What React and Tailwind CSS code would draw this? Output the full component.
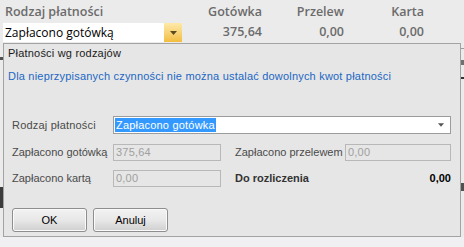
import React from "react";

const Arrow = ({ className }) => (
  <svg width="7" height="4" viewBox="0 0 7 4" className={className}>
    <path d="M0 0h7L3.5 4z" fill="currentColor" />
  </svg>
);

const Field = ({ value, className }) => (
  <div
    className={`h-[17px] border border-[#b8b8b8] bg-[#e6e6e6] text-[#a0a0a0] text-[11px] leading-[15px] pl-[2px] tracking-[0.2px] ${className}`}
  >
    {value}
  </div>
);

const Btn = ({ children }) => (
  <button className="w-[75px] h-[24px] rounded-[3px] border border-[#8e8e8e] bg-gradient-to-b from-[#f2f2f2] via-[#e8e8e8] to-[#cfcfcf] text-[11px] text-black shadow-[inset_0_0_0_1px_#fafafa]">
    {children}
  </button>
);

export default function App() {
  return (
    <div
      className="relative w-[464px] h-[247px] overflow-hidden bg-[#ebebeb]"
      style={{ fontFamily: "'Open Sans', 'Liberation Sans', sans-serif" }}
    >
      {/* header of the grid behind */}
      <div className="flex pt-[4px] text-[12.5px] font-semibold text-[#6b6b6b] leading-[16px]">
        <div className="w-[182px] pl-[5px]">Rodzaj płatności</div>
        <div className="w-[80px] text-right">Gotówka</div>
        <div className="w-[82px] text-right">Przelew</div>
        <div className="w-[80px] text-right">Karta</div>
      </div>
      <div className="flex mt-[3px] items-center">
        <div className="ml-[3px] w-[179px] h-[19px] bg-white flex items-center">
          <span className="flex-1 pl-[2px] text-[12px] text-black leading-[19px]">Zapłacono gotówką</span>
          <div className="w-[18px] h-[19px] bg-gradient-to-b from-[#fdeaa8] to-[#f3bd3c] flex items-center justify-center">
            <Arrow className="text-[#5a4a20]" />
          </div>
        </div>
        <div className="w-[80px] text-right text-[12.5px] font-semibold text-[#6b6b6b]">375,64</div>
        <div className="w-[82px] text-right text-[12.5px] font-semibold text-[#6b6b6b]">0,00</div>
        <div className="w-[80px] text-right text-[12.5px] font-semibold text-[#6b6b6b]">0,00</div>
      </div>

      {/* grid remains peeking out on both sides */}
      <div className="absolute left-0 top-[57px] w-[3px] h-[3px] bg-[#505050]" />
      <div className="absolute left-0 top-[187px] w-[3px] h-[21px] bg-[#3c3c3c]" />
      <div className="absolute right-0 top-[48px] w-[3px] h-px bg-[#9a9a9a]" />
      <div className="absolute right-0 top-[60px] w-[3px] h-[5px] bg-[#707070]" />
      <div className="absolute right-0 top-[77px] w-[3px] h-[2px] bg-[#333]" />
      <div className="absolute right-0 top-[183px] w-[3px] h-[8px] bg-[#505050]" />
      <div className="absolute left-0 right-0 top-[237px] h-[10px] bg-[#f0f0f3]" />

      {/* dialog */}
      <div
        className="absolute left-[3px] top-[43px] w-[458px] h-[194px] bg-[#e6e6e6] border border-[#a3a3a3] whitespace-nowrap"
        style={{ fontFamily: "'Liberation Sans', Arial, sans-serif" }}
      >
        <div className="pl-[4px] pt-[3px] text-[11px] leading-[13px] text-[#1a1a1a] tracking-[0.2px]">Płatności wg rodzajów</div>
        <div className="pl-[4px] mt-[10px] text-[11px] leading-[13px] text-[#1c66c4] tracking-[0.2px]">
          Dla nieprzypisanych czynności nie można ustalać dowolnych kwot płatności
        </div>

        <div className="flex items-center mt-[33px] pl-[8px]">
          <div className="w-[101px] text-[11px] text-[#4a4a4a] tracking-[0.2px]">Rodzaj płatności</div>
          <div className="w-[338px] h-[18px] bg-white border border-[#9c9c9c] flex items-center">
            <span className="ml-px px-px bg-[#3399ff] text-white text-[11px] leading-[14px] tracking-[0.2px]">Zapłacono gotówka</span>
            <span className="flex-1" />
            <Arrow className="text-[#555] mr-[6px] w-[6px]" />
          </div>
        </div>

        <div className="flex items-center mt-[10px] pl-[8px]">
          <div className="w-[101px] text-[11px] text-[#4a4a4a]">Zapłacono gotówką</div>
          <Field value="375,64" className="w-[108px]" />
          <div className="ml-[14px] w-[110px] text-[11px] text-[#4a4a4a]">Zapłacono przelewem</div>
          <Field value="0,00" className="w-[106px]" />
        </div>

        <div className="flex items-center mt-[9px] pl-[8px]">
          <div className="w-[101px] text-[11px] text-[#4a4a4a]">Zapłacono kartą</div>
          <Field value="0,00" className="w-[108px]" />
          <div className="ml-[14px] w-[110px] text-[11px] font-bold text-[#333]">Do rozliczenia</div>
          <div className="w-[106px] text-right text-[11px] font-bold text-black">0,00</div>
        </div>

        <div className="flex gap-[6px] mt-[21px] pl-[8px]">
          <Btn>OK</Btn>
          <Btn>Anuluj</Btn>
        </div>
      </div>
    </div>
  );
}
